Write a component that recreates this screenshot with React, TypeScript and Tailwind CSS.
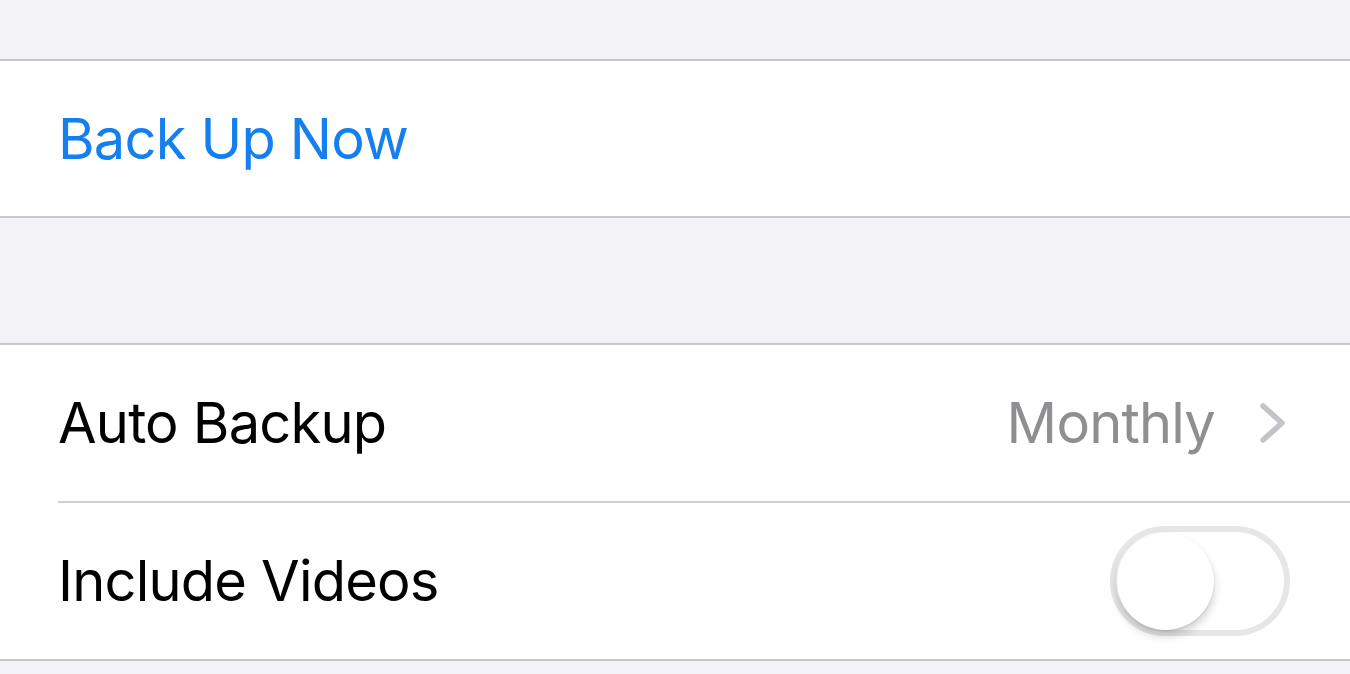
const font = { fontFamily: 'Inter, "Noto Sans", sans-serif' };

function Chevron() {
    return (
        <svg width="28" height="42" viewBox="0 0 28 42" className="ml-[44px]">
            <path d="M4 4 L23 21 L4 38" fill="none" stroke="#c4c4c8" strokeWidth="5.5" strokeLinecap="round" strokeLinejoin="round" />
        </svg>
    );
}

function Toggle() {
    return (
        <div className="w-[180px] h-[110px] rounded-full border-[6px] border-[#e6e6e9] bg-white flex items-center">
            <div className="ml-[1px] w-[97px] h-[97px] rounded-full bg-white shadow-[0_6px_10px_rgba(0,0,0,0.18),0_1px_2px_rgba(0,0,0,0.12)]" />
        </div>
    );
}

export default function App() {
    return (
        <div className="w-[1350px] h-[674px] bg-[#f2f2f7] overflow-hidden" style={font}>
            <div className="h-[59px]" />

            {/* first group */}
            <div className="bg-white border-y-2 border-[#c8c7cc]">
                <div className="h-[155px] flex items-center pl-[58px]">
                    <span className="text-[56px] text-[#167ff0] tracking-[-0.8px]">Back Up Now</span>
                </div>
            </div>

            <div className="h-[125px]" />

            {/* second group */}
            <div className="bg-white border-y-2 border-[#c8c7cc]">
                <div className="h-[156px] flex items-center pl-[58px] pr-[63px]">
                    <span className="text-[56px] text-black tracking-[-0.8px]">Auto Backup</span>
                    <span className="ml-auto text-[56px] text-[#8e8e93] tracking-[-0.8px]">Monthly</span>
                    <Chevron />
                </div>
                <div className="ml-[58px] h-[2px] bg-[#d0d0d4]" />
                <div className="h-[156px] flex items-center pl-[58px] pr-[60px]">
                    <span className="text-[56px] text-black tracking-[-0.8px]">Include Videos</span>
                    <div className="ml-auto">
                        <Toggle />
                    </div>
                </div>
            </div>
        </div>
    );
}
